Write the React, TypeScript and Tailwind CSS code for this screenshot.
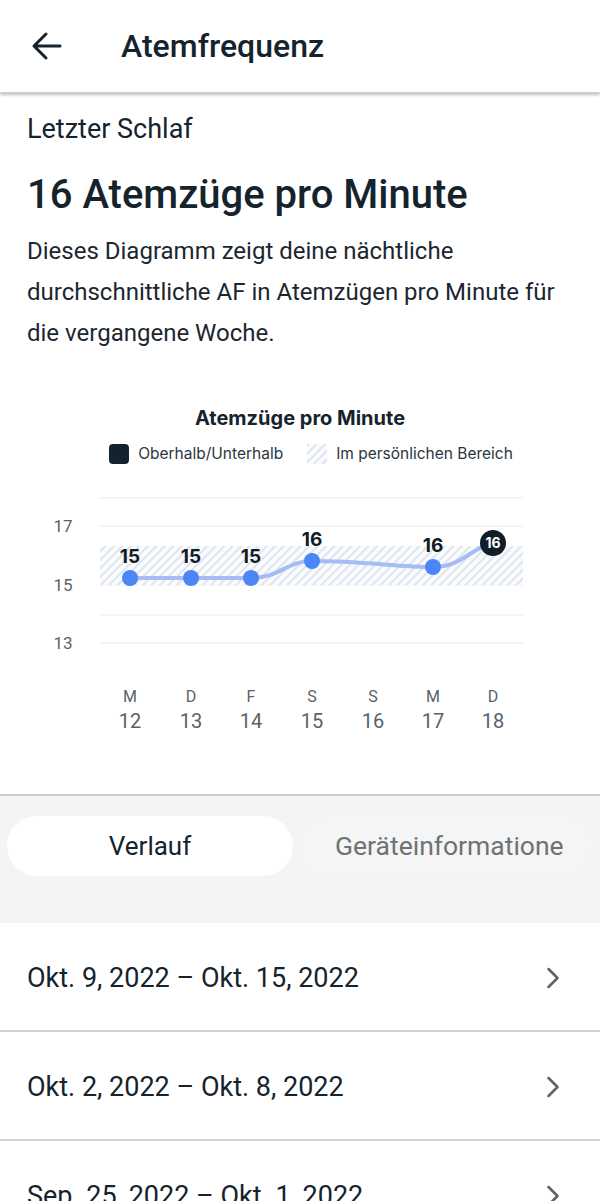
import { ChevronRight } from 'lucide-react'

const days = [
  { d: 'M', n: '12', x: 130 },
  { d: 'D', n: '13', x: 191 },
  { d: 'F', n: '14', x: 251 },
  { d: 'S', n: '15', x: 312 },
  { d: 'S', n: '16', x: 373 },
  { d: 'M', n: '17', x: 433 },
  { d: 'D', n: '18', x: 493 },
]

const points = [
  { x: 130, y: 89, v: '15', ly: 74 },
  { x: 191, y: 89, v: '15', ly: 74 },
  { x: 251, y: 89, v: '15', ly: 74 },
  { x: 312, y: 72, v: '16', ly: 57 },
  { x: 433, y: 78, v: '16', ly: 63 },
]

const weeks = [
  'Okt. 9, 2022 – Okt. 15, 2022',
  'Okt. 2, 2022 – Okt. 8, 2022',
  'Sep. 25, 2022 – Okt. 1, 2022',
]

function Hatch({ id }: { id: string }) {
  return (
    <pattern id={id} width="6" height="6" patternUnits="userSpaceOnUse" patternTransform="rotate(45)">
      <rect width="6" height="6" fill="#fafbfd" />
      <rect width="2" height="6" fill="#dfe5ee" />
    </pattern>
  )
}

function Chart() {
  return (
    <div className="mt-[51px] font-['Inter',sans-serif]">
      <p className="text-center text-[20px] font-bold leading-[26px] text-[#15232d]">Atemzüge pro Minute</p>
      <div className="mt-[13px] flex items-center justify-center gap-[24px] pl-[22px] text-[15.5px] leading-[20px] text-[#2a3640]">
        <div className="flex items-center gap-[9px]">
          <span className="h-[20px] w-[20px] rounded-[4px] bg-[#14222d]" />
          <span>Oberhalb/Unterhalb</span>
        </div>
        <div className="flex items-center gap-[9px]">
          <svg width="20" height="20">
            <defs>
              <Hatch id="hatch-legend" />
            </defs>
            <rect width="20" height="20" fill="url(#hatch-legend)" />
          </svg>
          <span>Im persönlichen Bereich</span>
        </div>
      </div>
      <svg width="600" height="250" className="mt-[25px] block">
        <defs>
          <Hatch id="hatch-band" />
        </defs>
        {[9, 37, 96, 126, 154].map(y => (
          <line key={y} x1="100" x2="523" y1={y} y2={y} stroke="#eef0f2" strokeWidth="1.5" />
        ))}
        <rect x="100" y="57" width="423" height="39" fill="url(#hatch-band)" />
        <g fill="#5a6168" fontSize="17" fontFamily="Roboto, sans-serif" textAnchor="middle">
          <text x="63" y="43">17</text>
          <text x="63" y="102">15</text>
          <text x="63" y="160">13</text>
        </g>
        <path
          d="M130 89 L251 89 C280 89 286 72 312 72 C360 72 400 78 433 78 C462 78 472 58 493 54"
          fill="none"
          stroke="#a5bcf4"
          strokeWidth="4"
          strokeLinecap="round"
        />
        {points.map(p => (
          <g key={p.x}>
            <circle cx={p.x} cy={p.y} r="8" fill="#4c85f5" />
            <text x={p.x} y={p.ly} textAnchor="middle" fontSize="19" fontWeight="700" fill="#111c24">
              {p.v}
            </text>
          </g>
        ))}
        <circle cx="493" cy="54" r="13" fill="#0f1e29" />
        <text x="493" y="59" textAnchor="middle" fontSize="14" fontWeight="700" fill="#ffffff">16</text>
        <g fill="#5a6168" fontFamily="Roboto, sans-serif" textAnchor="middle">
          {days.map(day => (
            <g key={day.n}>
              <text x={day.x} y="213" fontSize="16">{day.d}</text>
              <text x={day.x} y="239" fontSize="20">{day.n}</text>
            </g>
          ))}
        </g>
      </svg>
    </div>
  )
}

export default function App() {
  return (
    <div className="min-h-[1201px] bg-white font-['Roboto',sans-serif] text-[#15232d]">
      {/* Header */}
      <header className="relative z-10 flex h-[93px] items-center border-b border-[#cfcfcf] bg-white shadow-[0_2px_3px_rgba(0,0,0,0.25)]">
        <svg width="40" height="40" viewBox="0 0 40 40" className="ml-[27px]">
          <path d="M33 20 H7 M19 8 L7 20 L19 32" fill="none" stroke="#15232d" strokeWidth="3" strokeLinecap="round" strokeLinejoin="round" />
        </svg>
        <h1 className="ml-[54px] text-[32px] font-medium leading-none">Atemfrequenz</h1>
      </header>

      {/* Summary */}
      <section className="px-[27px] pt-[20px]">
        <p className="text-[27px] leading-[32px]">Letzter Schlaf</p>
        <h2 className="mt-[26px] text-[40px] font-medium leading-[48px]">16 Atemzüge pro Minute</h2>
        <p className="mt-[12px] text-[24px] leading-[41px] text-[#1b2730]">
          Dieses Diagramm zeigt deine nächtliche durchschnittliche AF in Atemzügen pro Minute für die vergangene Woche.
        </p>
      </section>

      <Chart />

      {/* Tabs */}
      <div className="mt-[55px] border-t-2 border-[#cdcdcd] bg-[#f3f4f4] px-[7px] pb-[47px] pt-[20px]">
        <div className="flex items-center gap-[4px]">
          <div className="flex h-[60px] w-[286px] items-center justify-center rounded-full bg-white text-[26px] text-[#15232d]">
            Verlauf
          </div>
          <div className="flex h-[60px] flex-1 items-center overflow-hidden rounded-full bg-[#f5f5f5] pl-[38px] text-[26.5px] text-[#6b7378]">
            <span className="whitespace-nowrap">Geräteinformatione</span>
          </div>
        </div>
      </div>

      {/* Weeks */}
      <ul>
        {weeks.map(w => (
          <li key={w} className="flex h-[109px] items-center justify-between border-b-2 border-[#d2d2d2] pl-[27px] pr-[29px] pt-[3px]">
            <span className="text-[27px] leading-none">{w}</span>
            <ChevronRight size={36} strokeWidth={1.7} color="#5f6368" />
          </li>
        ))}
      </ul>
    </div>
  )
}
